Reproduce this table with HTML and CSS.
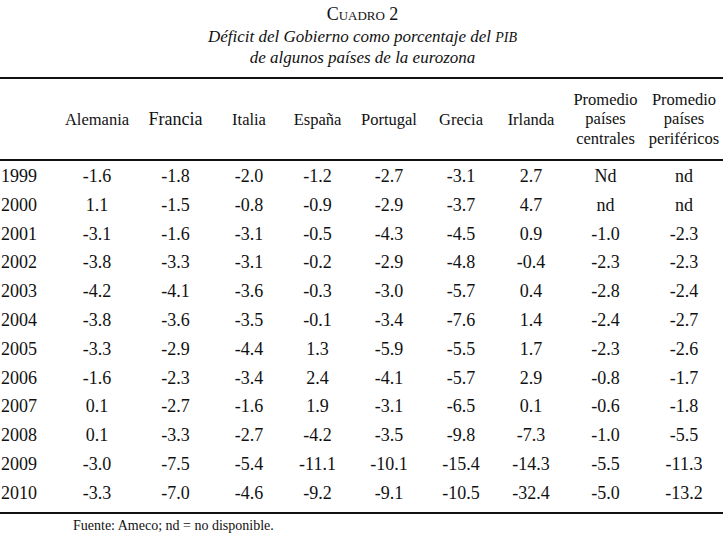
FILE: index.html
```html
<!DOCTYPE html>
<html lang="es">
<head>
<meta charset="utf-8">
<title>Cuadro 2</title>
<link rel="stylesheet" href="styles.css">
</head>
<body>
<div class="caption">
  <div class="cap-title">Cuadro 2</div>
  <div class="cap-sub">Déficit del Gobierno como porcentaje del <span class="sc">PIB</span></div>
  <div class="cap-sub">de algunos países de la eurozona</div>
</div>
<table class="data">
  <colgroup>
    <col class="c-year"><col class="c78"><col class="c79"><col class="c68"><col class="c69"><col class="c74"><col class="c70"><col class="c70"><col class="c79"><col class="c78">
  </colgroup>
  <thead>
    <tr class="head">
      <th></th>
      <th class="one">Alemania</th>
      <th class="one big">Francia</th>
      <th class="one">Italia</th>
      <th class="one">España</th>
      <th class="one">Portugal</th>
      <th class="one">Grecia</th>
      <th class="one">Irlanda</th>
      <th>Promedio<br>países<br>centrales</th>
      <th>Promedio<br>países<br>periféricos</th>
    </tr>
  </thead>
  <tbody>
    <tr class="first"><td>1999</td><td>-1.6</td><td>-1.8</td><td>-2.0</td><td>-1.2</td><td>-2.7</td><td>-3.1</td><td>2.7</td><td>Nd</td><td>nd</td></tr>
    <tr><td>2000</td><td>1.1</td><td>-1.5</td><td>-0.8</td><td>-0.9</td><td>-2.9</td><td>-3.7</td><td>4.7</td><td>nd</td><td>nd</td></tr>
    <tr><td>2001</td><td>-3.1</td><td>-1.6</td><td>-3.1</td><td>-0.5</td><td>-4.3</td><td>-4.5</td><td>0.9</td><td>-1.0</td><td>-2.3</td></tr>
    <tr><td>2002</td><td>-3.8</td><td>-3.3</td><td>-3.1</td><td>-0.2</td><td>-2.9</td><td>-4.8</td><td>-0.4</td><td>-2.3</td><td>-2.3</td></tr>
    <tr><td>2003</td><td>-4.2</td><td>-4.1</td><td>-3.6</td><td>-0.3</td><td>-3.0</td><td>-5.7</td><td>0.4</td><td>-2.8</td><td>-2.4</td></tr>
    <tr><td>2004</td><td>-3.8</td><td>-3.6</td><td>-3.5</td><td>-0.1</td><td>-3.4</td><td>-7.6</td><td>1.4</td><td>-2.4</td><td>-2.7</td></tr>
    <tr><td>2005</td><td>-3.3</td><td>-2.9</td><td>-4.4</td><td>1.3</td><td>-5.9</td><td>-5.5</td><td>1.7</td><td>-2.3</td><td>-2.6</td></tr>
    <tr><td>2006</td><td>-1.6</td><td>-2.3</td><td>-3.4</td><td>2.4</td><td>-4.1</td><td>-5.7</td><td>2.9</td><td>-0.8</td><td>-1.7</td></tr>
    <tr><td>2007</td><td>0.1</td><td>-2.7</td><td>-1.6</td><td>1.9</td><td>-3.1</td><td>-6.5</td><td>0.1</td><td>-0.6</td><td>-1.8</td></tr>
    <tr><td>2008</td><td>0.1</td><td>-3.3</td><td>-2.7</td><td>-4.2</td><td>-3.5</td><td>-9.8</td><td>-7.3</td><td>-1.0</td><td>-5.5</td></tr>
    <tr><td>2009</td><td>-3.0</td><td>-7.5</td><td>-5.4</td><td>-11.1</td><td>-10.1</td><td>-15.4</td><td>-14.3</td><td>-5.5</td><td>-11.3</td></tr>
    <tr class="last"><td>2010</td><td>-3.3</td><td>-7.0</td><td>-4.6</td><td>-9.2</td><td>-9.1</td><td>-10.5</td><td>-32.4</td><td>-5.0</td><td>-13.2</td></tr>
  </tbody>
</table>
<p class="source">Fuente: Ameco; nd = no disponible.</p>
</body>
</html>
```

FILE: styles.css
```css
html, body {
  margin: 0;
  padding: 0;
  background: #ffffff;
}

body {
  width: 725px;
  font-family: "Liberation Serif", "Times New Roman", serif;
  color: #111111;
}

.caption {
  width: 725px;
  text-align: center;
  padding-top: 2px;
  margin-bottom: 9px;
}

.cap-title {
  font-size: 18px;
  line-height: 25px;
  font-variant: small-caps;
}

.cap-sub {
  font-size: 17px;
  line-height: 20px;
  font-style: italic;
}

.sc {
  font-size: 14px;
}

.data {
  width: 723px;
  table-layout: fixed;
  border-collapse: separate;
  border-spacing: 0;
}

.c-year { width: 58px; }
.c78 { width: 78px; }
.c79 { width: 79px; }
.c68 { width: 68px; }
.c69 { width: 69px; }
.c74 { width: 74px; }
.c70 { width: 70px; }

.head {
  height: 84px;
}

.head th {
  font-weight: normal;
  font-size: 16.5px;
  line-height: 19.5px;
  text-align: center;
  vertical-align: middle;
  padding: 0;
  white-space: nowrap;
  border-top: 2px solid #111111;
  border-bottom: 2px solid #111111;
}

.head th.one {
  padding-top: 2px;
}

.head th.big {
  font-size: 18px;
}

.data td {
  font-size: 18px;
  line-height: 28.8px;
  padding: 0;
  text-align: center;
  white-space: nowrap;
}

.data td:first-child {
  text-align: left;
  padding-left: 1px;
}

.data tr.first td {
  padding-top: 1px;
}

.data tr.last td {
  padding-bottom: 4px;
  border-bottom: 2px solid #111111;
}

.source {
  margin: 0;
  padding: 2px 0 0 73px;
  font-size: 14px;
  line-height: 20px;
}
```
